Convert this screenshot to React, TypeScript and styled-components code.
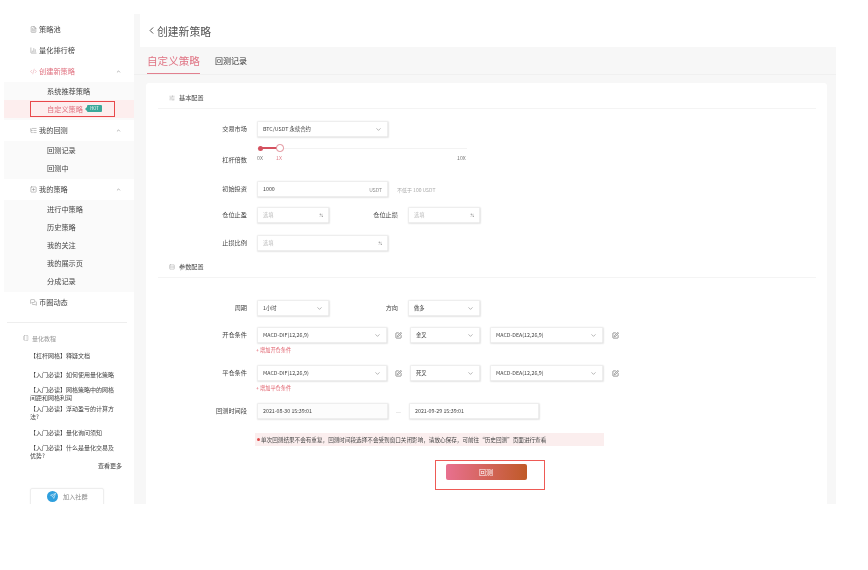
import React from 'react';
import styled, { createGlobalStyle } from 'styled-components';
import { BarChart3, ChevronDown, ChevronLeft, ChevronUp, Code2, FileText, ListTree, MessagesSquare, Notebook, Percent, Rows3, Send, SlidersHorizontal, SquarePen, SquarePlus } from 'lucide-react';

const Global = createGlobalStyle`
  html, body { margin: 0; padding: 0; background: #fff; }
  body { font-family: "Noto Sans CJK SC", "Liberation Sans", sans-serif; }
  * { box-sizing: border-box; }
`;

const Page = styled.div`
  display: flex; align-items: flex-start; width: 868px; height: 570px; overflow: hidden;
  background: #fff; filter: blur(0.4px);
`;

const Sidebar = styled.aside`
  width: 134px; height: 504px; overflow: hidden; padding-top: 18.5px; background: #fff; flex: none;
`;
const MenuItem = styled.div<{ $active?: boolean }>`
  display: flex; align-items: center; height: 21px; padding: 0 13px 0 30px; gap: 2px;
  font-size: 7.2px; color: ${p => (p.$active ? '#e0707f' : '#444')};
  svg { flex: none; }
  span { flex: 1; white-space: nowrap; }
`;
const SubMenu = styled.div`
  margin-left: 4px; padding-bottom: 2px; background: #fafafa;
`;
const SubItem = styled.div`
  display: flex; align-items: center; height: 18px; padding-left: 43px; font-size: 7.2px; color: #444; white-space: nowrap;
`;
const ActiveSub = styled.div`
  display: flex; align-items: center; height: 18px; padding-left: 26px; background: #fdeeee;
`;
const Annotated = styled.div`
  display: flex; align-items: center; gap: 4px; width: 85px; height: 16px; padding-left: 16px;
  border: 1.5px solid #e8484a; font-size: 7.2px; color: #e0707f; white-space: nowrap;
`;
const HotBadge = styled.span`
  display: inline-flex; align-items: center; justify-content: center; position: relative; width: 15px; height: 7px;
  background: #3aa99a; border-radius: 1px; color: #fff; font-size: 4.2px; line-height: 7px;
  &::before {
    content: ''; position: absolute; left: -2px; top: 1.5px;
    border-top: 2px solid transparent; border-bottom: 2px solid transparent; border-right: 2px solid #3aa99a;
  }
`;
const SideDivider = styled.div`
  height: 1px; margin: 9px 7px 0; background: #eee;
`;
const TutorialTitle = styled.div`
  display: flex; align-items: center; gap: 3px; height: 9px; margin: 11px 0 0 23px; font-size: 6px; color: #999;
`;
const TutorialLink = styled.div<{ $gap: number }>`
  width: 89px; margin: ${p => p.$gap}px 0 0 30px; font-size: 6px; line-height: 8.3px; color: #444;
`;
const MoreLink = styled.div`
  width: 92px; margin: 1.6px 0 0 30px; font-size: 6px; line-height: 8.3px; color: #444; text-align: right;
`;
const JoinButton = styled.div`
  display: flex; align-items: center; gap: 5px; width: 74px; height: 26px; margin: 17px 0 0 30px; padding: 0 0 9px 16px;
  border: 1px solid #eee; border-radius: 2px; box-shadow: 0 0 2px rgba(0,0,0,.05); font-size: 6.2px; color: #888;
`;
const TelegramDot = styled.span`
  display: flex; align-items: center; justify-content: center; width: 11px; height: 11px; border-radius: 50%; background: #2f9fdd; color: #fff;
`;

const Main = styled.main`
  display: flex; flex-direction: column; width: 702px; height: 490px; margin-top: 14px; background: #f7f7f7; flex: none;
`;
const Header = styled.header`
  display: flex; align-items: center; height: 33px; margin-left: 6px; padding: 0 0 0 6px; background: #fff;
  font-size: 10.8px; color: #555; flex: none;
`;
const Tabs = styled.nav`
  display: flex; align-items: flex-end; gap: 15px; height: 28px; padding-left: 13px; border-bottom: 1px solid #f0f0f0; flex: none;
`;
const Tab = styled.div<{ $active?: boolean }>`
  height: 28px; padding-top: 2px; line-height: 26px; white-space: nowrap;
  font-size: ${p => (p.$active ? '10.6px' : '8px')};
  color: ${p => (p.$active ? '#e07585' : '#333')};
  border-bottom: ${p => (p.$active ? '1.5px solid #e2808f' : 'none')};
`;
const Card = styled.section`
  flex: 1; margin: 8px 9px 0 12px; padding: 0 11px 0 12px; background: #fff; border-radius: 3px 3px 0 0;
`;
const SectionHead = styled.div<{ $top?: number }>`
  display: flex; align-items: center; gap: 4px; height: 26px; margin-top: ${p => p.$top ?? 0}px; padding: 4px 0 0 11px;
  border-bottom: 1px solid #f4f4f4; font-size: 6.2px; color: #444;
`;
const Row = styled.div<{ $top: number }>`
  display: flex; align-items: center; gap: 10px; height: 16px; margin-top: ${p => p.$top}px;
`;
const SliderRow = styled.div`
  display: flex; align-items: flex-end; gap: 10px; height: 23px; margin-top: 5px;
`;
const Label = styled.div<{ $w?: number }>`
  width: ${p => p.$w ?? 89}px; flex: none; text-align: right; font-size: 6.2px; line-height: 10px; color: #444; white-space: nowrap;
`;
const Field = styled.div<{ $w: number; $muted?: boolean; $mr?: number }>`
  display: flex; align-items: center; justify-content: space-between; flex: none;
  width: ${p => p.$w}px; height: 16px; padding: 0 5px 0 5px; margin-right: ${p => p.$mr ?? 0}px;
  background: ${p => (p.$muted ? '#fcfcfc' : '#fff')}; border: 1px solid #eee; border-radius: 1.5px;
  box-shadow: 0.5px 0.5px 1.5px rgba(0,0,0,.1);
  font-size: 5.3px; color: #444; white-space: nowrap;
`;
const Placeholder = styled.span`
  color: #bbb;
`;
const Unit = styled.span`
  color: #888; font-size: 5px;
`;
const Hint = styled.span`
  font-size: 5px; color: #aaa; white-space: nowrap; margin-left: -1px;
`;
const ConditionGroup = styled.div`
  display: flex; align-items: center;
`;
const EditSlot = styled.div<{ $w: number }>`
  display: flex; align-items: center; justify-content: center; width: ${p => p.$w}px; height: 16px; color: #555; flex: none;
`;
const AddHint = styled.div`
  margin: 3px 0 0 98px; font-size: 5.2px; line-height: 8px; color: #e0606c;
`;
const Dash = styled.div`
  width: 21px; flex: none; text-align: center; font-size: 6px; color: #ccc;
`;
const Notice = styled.div`
  display: flex; align-items: center; height: 13px; width: 349px; margin: 14px 0 0 97px; padding-left: 2px;
  background: #fbeeee; font-size: 5.6px; color: #444; white-space: nowrap;
`;
const NoticeDot = styled.span`
  width: 3px; height: 3px; margin-right: 1px; border-radius: 50%; background: #e04b4b; flex: none;
`;
const ButtonFrame = styled.div`
  width: 110px; height: 30px; margin: 14px 0 0 277px; padding: 2.5px 0 0 9.5px; border: 1.5px solid #ee5a55;
`;
const RunButton = styled.div`
  display: flex; align-items: center; justify-content: center; width: 81px; height: 16px; border-radius: 2px;
  background: linear-gradient(90deg, #e8708f, #c05a28); color: #fff; font-size: 7px;
`;

const Slider = styled.div`
  position: relative; width: 210px; height: 23px;
`;
const Track = styled.div`
  position: absolute; left: 0; right: 0; top: 5.5px; height: 1px; background: #f3f3f3;
`;
const TrackFill = styled.div`
  position: absolute; left: 3px; top: 5.3px; width: 20px; height: 1.5px; background: #d4515f;
`;
const Knob = styled.div<{ $x: number; $hollow?: boolean }>`
  position: absolute; left: ${p => p.$x}px; top: ${p => (p.$hollow ? 2 : 3.5)}px;
  width: ${p => (p.$hollow ? 7.5 : 5)}px; height: ${p => (p.$hollow ? 7.5 : 5)}px; border-radius: 50%;
  background: ${p => (p.$hollow ? '#fff' : '#d4515f')}; border: ${p => (p.$hollow ? '1px solid #e08a94' : 'none')};
`;
const Mark = styled.span<{ $x: number; $on?: boolean }>`
  position: absolute; left: ${p => p.$x}px; top: 12px; font-size: 5.2px; line-height: 8px; color: ${p => (p.$on ? '#e0808c' : '#777')};
`;

const Caret = () => <ChevronDown size={7} color="#666" strokeWidth={1.6} />;
const Edit = () => <SquarePen size={7} strokeWidth={2} />;

const Menu = ({ icon, text, active, open }: { icon: React.ReactNode; text: string; active?: boolean; open?: boolean }) => (
  <MenuItem $active={active}>
    {icon}
    <span>{text}</span>
    {open && <ChevronUp size={5} color="#555" strokeWidth={2} />}
  </MenuItem>
);

const PercentField = ({ w }: { w: number }) => (
  <Field $w={w}>
    <Placeholder>选填</Placeholder>
    <Percent size={4.5} color="#666" strokeWidth={1.6} />
  </Field>
);

const Condition = ({ top, label, side }: { top: number; label: string; side: string }) => (
  <Row $top={top}>
    <Label>{label}</Label>
    <ConditionGroup>
      <Field $w={130}>MACD-DIF(12,26,9)<Caret /></Field>
      <EditSlot $w={23}><Edit /></EditSlot>
      <Field $w={70} $mr={10}>{side}<Caret /></Field>
      <Field $w={113}>MACD-DEA(12,26,9)<Caret /></Field>
      <EditSlot $w={24}><Edit /></EditSlot>
    </ConditionGroup>
  </Row>
);

export default function App() {
  const ic = { size: 7, strokeWidth: 1.3 };
  return (
    <>
      <Global />
      <Page>
        <Sidebar>
          <Menu icon={<FileText {...ic} color="#666" />} text="策略池" />
          <Menu icon={<BarChart3 {...ic} color="#666" />} text="量化排行榜" />
          <Menu icon={<Code2 {...ic} color="#e0808c" />} text="创建新策略" active open />
          <SubMenu>
            <SubItem>系统推荐策略</SubItem>
            <ActiveSub>
              <Annotated>自定义策略<HotBadge>HOT</HotBadge></Annotated>
            </ActiveSub>
          </SubMenu>
          <Menu icon={<ListTree {...ic} color="#666" />} text="我的回测" open />
          <SubMenu>
            <SubItem>回测记录</SubItem>
            <SubItem>回测中</SubItem>
          </SubMenu>
          <Menu icon={<SquarePlus {...ic} color="#666" />} text="我的策略" open />
          <SubMenu>
            <SubItem>进行中策略</SubItem>
            <SubItem>历史策略</SubItem>
            <SubItem>我的关注</SubItem>
            <SubItem>我的展示页</SubItem>
            <SubItem>分成记录</SubItem>
          </SubMenu>
          <Menu icon={<MessagesSquare {...ic} color="#666" />} text="币圈动态" />
          <SideDivider />
          <TutorialTitle><Notebook size={6} strokeWidth={1.2} color="#999" />量化教程</TutorialTitle>
          <TutorialLink $gap={9.5}>【杠杆网格】释疑文档</TutorialLink>
          <TutorialLink $gap={10.6}>【入门必读】如何使用量化策略</TutorialLink>
          <TutorialLink $gap={6.6}>【入门必读】网格策略中的网格间距和网格利润</TutorialLink>
          <TutorialLink $gap={2.6}>【入门必读】浮动盈亏的计算方法?</TutorialLink>
          <TutorialLink $gap={7.6}>【入门必读】量化询问须知</TutorialLink>
          <TutorialLink $gap={6.6}>【入门必读】什么是量化交易及优势?</TutorialLink>
          <MoreLink>查看更多</MoreLink>
          <JoinButton>
            <TelegramDot><Send size={6} strokeWidth={2} /></TelegramDot>
            加入社群
          </JoinButton>
        </Sidebar>

        <Main>
          <Header><ChevronLeft size={11} strokeWidth={2} color="#444" />创建新策略</Header>
          <Tabs>
            <Tab $active>自定义策略</Tab>
            <Tab>回测记录</Tab>
          </Tabs>
          <Card>
            <SectionHead><SlidersHorizontal size={6} strokeWidth={1.3} color="#888" />基本配置</SectionHead>
            <Row $top={12}>
              <Label>交易市场</Label>
              <Field $w={131}>BTC/USDT 永续合约<Caret /></Field>
            </Row>
            <SliderRow>
              <Label>杠杆倍数</Label>
              <Slider>
                <Track />
                <TrackFill />
                <Knob $x={0.5} />
                <Knob $x={19} $hollow />
                <Mark $x={0}>0X</Mark>
                <Mark $x={19} $on>1X</Mark>
                <Mark $x={200}>10X</Mark>
              </Slider>
            </SliderRow>
            <Row $top={16}>
              <Label>初始投资</Label>
              <Field $w={131}>1000<Unit>USDT</Unit></Field>
              <Hint>不低于 100 USDT</Hint>
            </Row>
            <Row $top={10}>
              <Label>仓位止盈</Label>
              <PercentField w={72} />
              <Label $w={59}>仓位止损</Label>
              <PercentField w={72} />
            </Row>
            <Row $top={12}>
              <Label>止损比例</Label>
              <PercentField w={131} />
            </Row>
            <SectionHead $top={1}><Rows3 size={6} strokeWidth={1.3} color="#888" />参数配置</SectionHead>
            <Row $top={22}>
              <Label>周期</Label>
              <Field $w={72}>1小时<Caret /></Field>
              <Label $w={59}>方向</Label>
              <Field $w={72}>做多<Caret /></Field>
            </Row>
            <Condition top={11} label="开仓条件" side="金叉" />
            <AddHint>+ 增加开仓条件</AddHint>
            <Condition top={11} label="平仓条件" side="死叉" />
            <AddHint>+ 增加平仓条件</AddHint>
            <Row $top={11}>
              <Label>回测时间段</Label>
              <ConditionGroup>
                <Field $w={131} $muted>2021-08-30 15:39:01</Field>
                <Dash>—</Dash>
                <Field $w={130}>2021-09-29 15:39:01</Field>
              </ConditionGroup>
            </Row>
            <Notice>
              <NoticeDot />
              单次回测结果不会有重复，回测时间段选择不会受到窗口关闭影响，请放心保存，可前往“历史回测”页面进行查看
            </Notice>
            <ButtonFrame><RunButton>回测</RunButton></ButtonFrame>
          </Card>
        </Main>
      </Page>
    </>
  );
}
